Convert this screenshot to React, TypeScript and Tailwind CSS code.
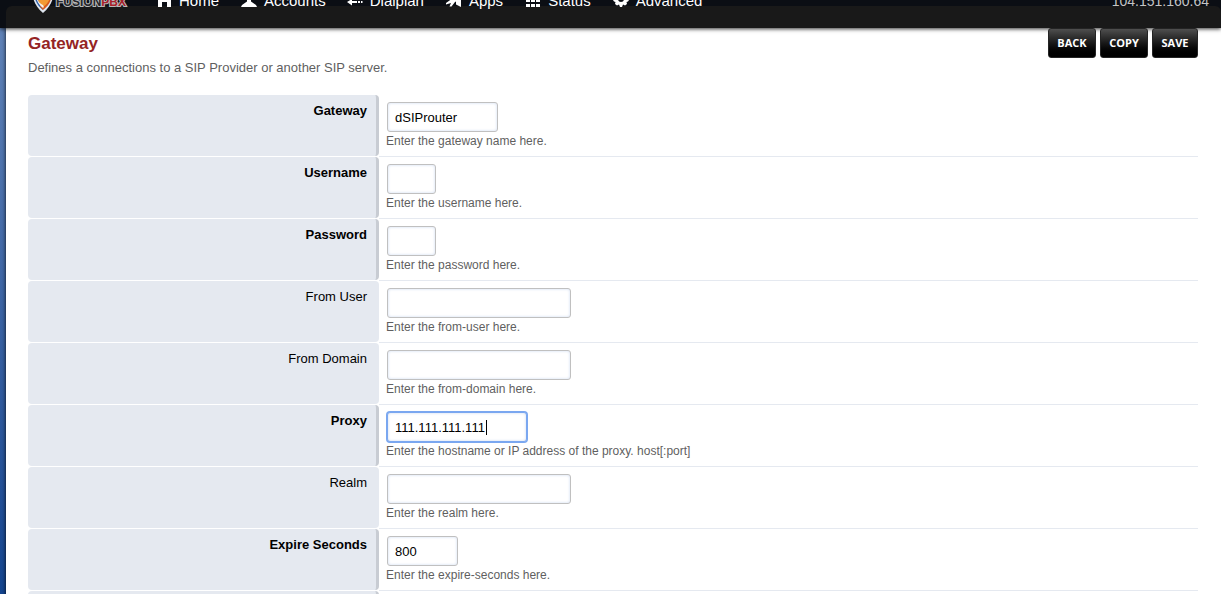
import type { ReactNode } from "react";

type Field = {
  id: string;
  label: string;
  hint: string;
  width: string;
  required?: boolean;
  value?: string;
  type?: string;
  focused?: boolean;
};

const fields: Field[] = [
  { id: "gateway", label: "Gateway", hint: "Enter the gateway name here.", width: "w-[111px]", required: true, value: "dSIProuter" },
  { id: "username", label: "Username", hint: "Enter the username here.", width: "w-[49px]", required: true },
  { id: "password", label: "Password", hint: "Enter the password here.", width: "w-[49px]", required: true, type: "password" },
  { id: "from-user", label: "From User", hint: "Enter the from-user here.", width: "w-[184px]" },
  { id: "from-domain", label: "From Domain", hint: "Enter the from-domain here.", width: "w-[184px]" },
  { id: "proxy", label: "Proxy", hint: "Enter the hostname or IP address of the proxy. host[:port]", width: "w-[140px]", required: true, value: "111.111.111.111", focused: true },
  { id: "realm", label: "Realm", hint: "Enter the realm here.", width: "w-[184px]" },
  { id: "expire", label: "Expire Seconds", hint: "Enter the expire-seconds here.", width: "w-[71px]", required: true, value: "800" },
  { id: "register", label: "", hint: "", width: "w-[71px]", required: true },
];

function Icon({ children }: { children: ReactNode }) {
  return (
    <svg viewBox="0 0 16 16" className="mb-1 size-4 shrink-0" fill="currentColor" aria-hidden="true">
      {children}
    </svg>
  );
}

const menu: { label: string; gap: string; icon: ReactNode }[] = [
  { label: "Home", gap: "mr-[22px]", icon: <path d="M9 1 1 9h1v7h4v-5h5v5h4V9h1Z" /> },
  { label: "Accounts", gap: "mr-[21px]", icon: <path d="M8 0c3 0 4 2 4 4 0 2-1 4-2 5v1.500l5 3.500 1 2H0l1-2 5-3.500V9C5 8 4 6 4 4c0-2 1-4 4-4Z" /> },
  { label: "Dialplan", gap: "mr-[22px]", icon: <path d="M9 2h7L12 6H9ZM5 8v2h5v2H5v2.500L0 11Zm6 2h2v2h-2Zm3 0h1.500v2H14Z" /> },
  { label: "Apps", gap: "mr-[22px]", icon: <path d="m16 0-4 1-5 6-7 5v1.500l5-1.500-1.500 3.500h2L9 11l1-.500v3l5 2.500V5Z" /> },
  { label: "Status", gap: "mr-[22px]", icon: <path d="M1 3h4v3H1Zm5 0h4v3H6Zm5 0h4v3h-4ZM1 8h4v3H1Zm5 0h4v3H6Zm5 0h4v3h-4ZM1 13h4v3H1Zm5 0h4v3H6Zm5 0h4v3h-4Z" /> },
  { label: "Advanced", gap: "", icon: <path fillRule="evenodd" d="M6.500 0h3l.5 2 2 1 2-1 2 2-1 2 .5 2L16 9l-1 1.500-1.500.5.5 2-2 1.500-2-1-1 2.500H7l-1-2.500-2 1L2 13l.5-2L1 10.500 0 9l1-1V6L0 4l2-2 2 1 2-1ZM8 5a3 3 0 1 0 0 6 3 3 0 0 0 0-6Z" /> },
];

function Header() {
  return (
    <header className="relative grid h-7 bg-[#0b0e14] shadow-[0_1px_4px_rgba(0,0,0,0.8)]">
      <div className="col-start-1 row-start-1 mt-1.5 ml-1.5 h-[22px] rounded-t-md bg-[#191919]" />
      <nav className="z-10 col-start-1 row-start-1 flex h-[11px] items-end pr-3 pl-8 text-[15px] leading-5 text-white">
        <a href="#" className="flex w-[124px] shrink-0 items-end gap-0.5" aria-label="FusionPBX">
          <svg viewBox="0 0 24 30" className="-mb-0.5 h-[30px] w-[22px] shrink-0" preserveAspectRatio="none" aria-hidden="true">
            <path d="M0 4c4 0 8-1 12-4 4 3 8 4 12 4 0 12-3 19-12 26C3 23 0 16 0 4Z" fill="#dfe5ee" />
            <path d="M2 6c4 0 7-1 10-3v24C5 22 2 16 2 6Z" fill="#2b5da8" />
            <path d="M12 3c3 2 6 3 10 3 0 11-3 16-10 21l-3-3Z" fill="#d95a1b" />
            <path d="M5 12c2 4 4 5 8 4 3-1 5-3 7-6 0 7-3 11-8 14-4-3-6-7-7-12Z" fill="#f39a33" />
            <path d="M5 14c2 5 4 7 7 8l1 2-1 1c-4-3-7-6-7-11Z" fill="#f4f0ea" />
          </svg>
          <span className="text-[12px] leading-[18px] font-bold text-[#25262b] [-webkit-text-stroke:2px_#b9b9b9] [paint-order:stroke]">
            FUSION<span className="text-[#a8202a]">PBX</span>
          </span>
        </a>
        {menu.map((item) => (
          <a key={item.label} href="#" className={`flex shrink-0 items-end gap-[7px] ${item.gap}`}>
            <Icon>{item.icon}</Icon>
            {item.label}
          </a>
        ))}
        <span className="ml-auto text-[14px] text-[#c4c4c4]">104.151.160.64</span>
      </nav>
    </header>
  );
}

function ActionButton({ children, width }: { children: ReactNode; width: string }) {
  return (
    <button
      type="button"
      className={`h-[30px] rounded-[3px] border border-[#242424] bg-linear-to-b from-[#4f4f4f] to-black px-[7px] font-['Open_Sans',sans-serif] text-[11px] leading-4 font-bold text-white ${width}`}
    >
      {children}
    </button>
  );
}

function FieldRow({ field }: { field: Field }) {
  return (
    <div className="flex h-[62px]">
      <div
        className={`h-[61px] w-[30%] shrink-0 rounded-[4px] bg-[#e5e9f0] pt-2 text-right text-[13px] leading-4 text-black ${
          field.required ? "border-r-3 border-[#c8ccd3] pr-[9px] font-bold" : "pr-3"
        }`}
      >
        <label htmlFor={field.id}>{field.label}</label>
      </div>
      <div className="flex-1 border-b border-[#e5e9f0] pt-[7px] pl-2">
        <div className={`relative ${field.width}`}>
          <input
            id={field.id}
            type={field.type ?? "text"}
            defaultValue={field.value}
            autoFocus={field.focused}
            className="block h-[30px] w-full rounded-[3px] border border-[#c0c0c0] bg-white px-[7px] text-[13px] leading-4 text-black caret-transparent shadow-[inset_0_0_3px_#cddaf0] outline-none focus:border-[#7aa7f0] focus:ring-1 focus:ring-[#7aa7f0]"
          />
          {field.focused && <span className="absolute top-2 left-[99px] h-[15px] w-px bg-black" />}
        </div>
        <p className="mt-px -ml-px text-[12px] leading-4 text-[#5f5f5f]">{field.hint}</p>
      </div>
    </div>
  );
}

export default function App() {
  return (
    <div className="h-screen overflow-hidden bg-linear-to-b from-[#6486ba] to-[#144590] font-['Liberation_Sans',Arial,sans-serif]">
      <Header />
      <main className="ml-1.5 bg-white pr-[23px] pb-6 pl-[22px] shadow-[0_0_4px_rgba(0,0,0,0.9)]">
        <div className="flex h-[67px] items-start justify-between">
          <div className="pt-1.5">
            <h1 className="text-[17px] leading-5 font-bold text-[#952424]">Gateway</h1>
            <p className="mt-1 text-[13px] leading-5 text-[#5f5f5f]">Defines a connections to a SIP Provider or another SIP server.</p>
          </div>
          <div className="relative flex gap-1">
            <ActionButton width="min-w-12">BACK</ActionButton>
            <ActionButton width="min-w-12">COPY</ActionButton>
            <ActionButton width="min-w-[46px]">SAVE</ActionButton>
          </div>
        </div>
        <form>
          {fields.map((field) => (
            <FieldRow key={field.id} field={field} />
          ))}
        </form>
      </main>
    </div>
  );
}
